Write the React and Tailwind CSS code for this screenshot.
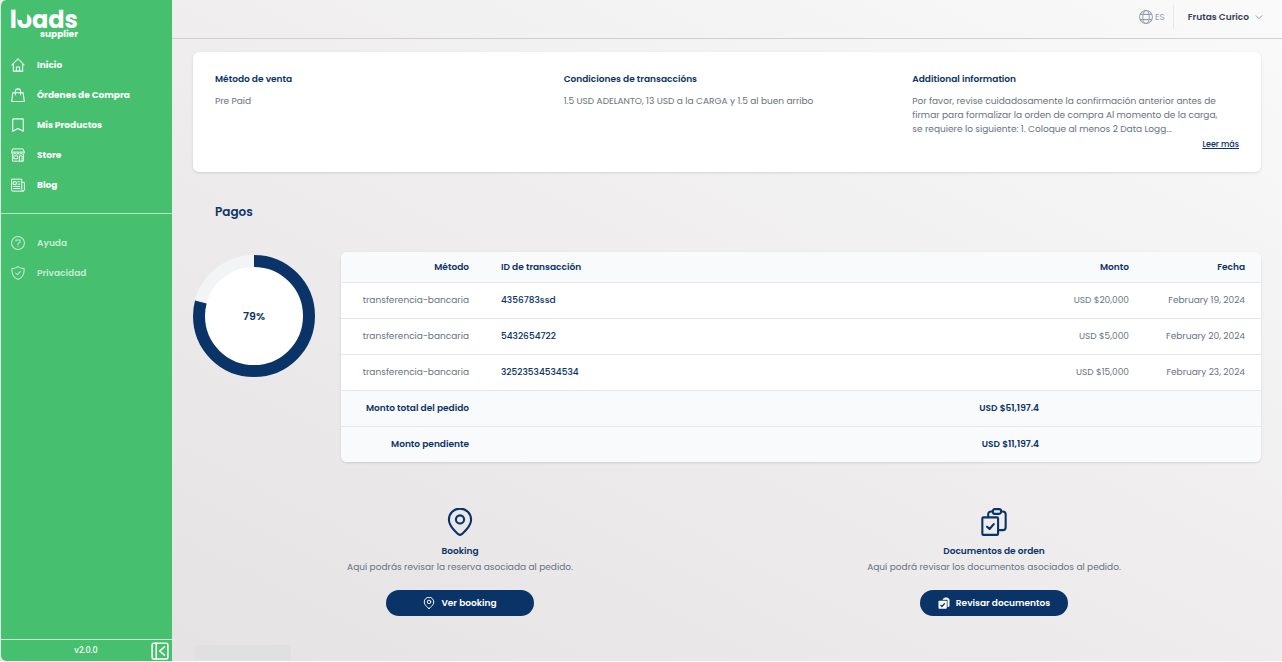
// src/App.jsx

const payments = [
  { id: '4356783ssd', method: 'transferencia-bancaria', amount: 'USD $20,000', date: 'February 19, 2024' },
  { id: '5432654722', method: 'transferencia-bancaria', amount: 'USD $5,000', date: 'February 20, 2024' },
  { id: '32523534534534', method: 'transferencia-bancaria', amount: 'USD $15,000', date: 'February 23, 2024' },
];

const totals = [
  { label: 'Monto total del pedido', amount: 'USD $51,197.4' },
  { label: 'Monto pendiente', amount: 'USD $11,197.4' },
];

// Base wrapper for the line icons
function Icon({ className, strokeWidth = 1.8, children }) {
  return (
    <svg
      viewBox="0 0 24 24"
      fill="none"
      stroke="currentColor"
      strokeWidth={strokeWidth}
      strokeLinecap="round"
      strokeLinejoin="round"
      aria-hidden="true"
      className={className}
    >
      {children}
    </svg>
  );
}

const HomeIcon = (props) => (
  <Icon {...props}>
    <path d="M1.5 12 12 1.5 22.5 12M4 9.8V22.5h16V9.8M9.2 22.5v-7.2h5.6v7.2" />
  </Icon>
);

const BagIcon = (props) => (
  <Icon {...props}>
    <path d="M3.2 8h17.6l2 15H1.2zM7.5 11.5V6a4.5 4.5 0 0 1 9 0v5.5" />
  </Icon>
);

const BookmarkIcon = (props) => (
  <Icon {...props}>
    <path d="M4.5 1.5h15A1.5 1.5 0 0 1 21 3v19.7L12 18l-9 4.7V3a1.5 1.5 0 0 1 1.5-1.5z" />
  </Icon>
);

const StoreIcon = (props) => (
  <Icon {...props} strokeWidth={1.6}>
    <path d="M3.5 1.5h17L23 7.5c0 4-5.5 4-5.5.5 0 3.5-5.5 3.5-5.5 0 0 3.5-5.5 3.5-5.5 0 0 3.5-5.5 3.5-5.5-.5zM1.5 7h21" />
    <path d="M2.5 11v11.5h19V11M5.5 13.5h6v5h-6zM14.5 22.5v-9H19v9" />
  </Icon>
);

const NewsIcon = (props) => (
  <Icon {...props} strokeWidth={1.6}>
    <path d="M18.5 7.5H23V20a2.5 2.5 0 0 1-2.5 2.5h-17A2.5 2.5 0 0 1 1 20V2h17.5v18a2.5 2.5 0 0 0 2 2.5" />
    <path d="M4.5 6.5H9V11H4.5zM12 6.5h3M12 10.5h3M4.5 14.5H15M4.5 18H15" />
  </Icon>
);

const HelpIcon = (props) => (
  <Icon {...props}>
    <circle cx="12" cy="12" r="11" />
    <path d="M8.5 9V7h7v3.5L12 13v2M12 18v.2" />
  </Icon>
);

const ShieldIcon = (props) => (
  <Icon {...props}>
    <path d="M12 1c3 2.5 6.5 3.5 10.5 3.5C23 13 20 20 12 23 4 20 1 13 1.5 4.5 5.5 4.5 9 3.5 12 1zM8 12l3 3 5-5.5" />
  </Icon>
);

const GlobeIcon = (props) => (
  <Icon {...props}>
    <circle cx="12" cy="12" r="11" />
    <ellipse cx="12" cy="12" rx="5.5" ry="11" />
    <path d="M2.5 7.5h19M2.5 16.5h19" />
  </Icon>
);

const PinIcon = (props) => (
  <Icon {...props}>
    <path d="M12 23c-1 0-9.5-6.8-9.5-13a9.5 9.5 0 0 1 19 0C21.5 16.2 13 23 12 23z" />
    <circle cx="12" cy="9.8" r="3.5" />
  </Icon>
);

const DocumentsIcon = (props) => (
  <Icon {...props}>
    <rect x="2" y="8" width="13.5" height="15" rx="1" />
    <path d="M6 16l2.2 2 3.6-4.2" />
    <path d="M7 7.5v-2A2.5 2.5 0 0 1 9.5 3H11M18 3h1.5A2.5 2.5 0 0 1 22 5.5v11a2.5 2.5 0 0 1-2.5 2.5h-4" />
    <rect x="11" y="1" width="7" height="4" rx="1.5" />
  </Icon>
);

// Solid version, used inside the button
const DocumentsSolidIcon = ({ className }) => (
  <svg viewBox="0 0 24 24" aria-hidden="true" className={className}>
    <path
      fill="currentColor"
      d="M9 5.5a3.5 3.5 0 0 1 3-3A3 3 0 0 1 14.500 1h3A3 3 0 0 1 20 2.5 3.500 3.500 0 0 1 23 6v11a3 3 0 0 1-3 3h-1V5.5z"
    />
    <rect x="1" y="7.5" width="16.5" height="16" rx="1.5" fill="currentColor" />
    <path d="M5 16l3 3 5.5-6.5" fill="none" stroke="#0a3467" strokeWidth="2.4" />
  </svg>
);

const CollapseIcon = (props) => (
  <Icon {...props}>
    <rect x="1.5" y="1.5" width="21" height="21" rx="2" />
    <path d="M7 1.5v21M18 6.5 11.5 12l6.5 5.5" />
  </Icon>
);

const mainLinks = [
  { label: 'Inicio', icon: HomeIcon },
  { label: 'Órdenes de Compra', icon: BagIcon },
  { label: 'Mis Productos', icon: BookmarkIcon },
  { label: 'Store', icon: StoreIcon },
  { label: 'Blog', icon: NewsIcon },
];

const helpLinks = [
  { label: 'Ayuda', icon: HelpIcon },
  { label: 'Privacidad', icon: ShieldIcon },
];

function NavList({ links, className }) {
  return (
    <ul className={className}>
      {links.map(({ label, icon: LinkIcon }) => (
        <li key={label}>
          <a href="#" className="flex h-[30px] items-center gap-3 pl-[10px]">
            <LinkIcon className="size-[14px] shrink-0" />
            {label}
          </a>
        </li>
      ))}
    </ul>
  );
}

function Logo() {
  return (
    <a href="#" className="ml-2 flex w-[69px] flex-col items-end pt-[10px] text-white">
      <span className="relative text-2xl leading-5 font-bold">
        loads
        {/* opening in the top of the "o" */}
        <span className="absolute top-1 left-2 h-[6px] w-[9px] bg-[#46c06f]" />
      </span>
      <span className="text-[9px] leading-2 font-bold">supplier</span>
    </a>
  );
}

function Sidebar() {
  return (
    <aside className="flex w-[172px] shrink-0 flex-col rounded-l-md border-l border-[#d9f3e2] bg-[#46c06f]">
      <Logo />
      <nav className="flex-1 pt-3 text-[9px] leading-4">
        <NavList links={mainLinks} className="pb-[13px] font-bold text-white" />
        <NavList links={helpLinks} className="border-t border-[#b5e6c5] pt-[14px] font-semibold text-[#c4ecd1]" />
      </nav>
      <div className="flex h-[22px] items-center border-t border-[#c8eed5] pr-[3px] pl-5 text-white">
        <span className="flex-1 text-center text-[8px] font-medium">v2.0.0</span>
        <button type="button" aria-label="Contraer menú">
          <CollapseIcon className="size-[18px]" strokeWidth={2} />
        </button>
      </div>
    </aside>
  );
}

function Header() {
  return (
    <header className="flex h-[39px] items-center justify-end border-b border-[#d0d0d2] pr-[19px] pb-1 text-[9px] leading-4">
      <button type="button" className="flex items-center gap-[2px] pr-2 text-gray-400">
        <GlobeIcon className="size-[14px]" />
        ES
      </button>
      <button type="button" className="flex h-6 items-center gap-[6px] border-l border-gray-200 pl-[14px] font-semibold text-gray-700">
        Frutas Curico
        <Icon className="size-2 text-gray-400" strokeWidth={3}>
          <path d="m3 8 9 9 9-9" />
        </Icon>
      </button>
    </header>
  );
}

function OrderInfo() {
  return (
    <section className="grid min-h-[120px] grid-cols-3 gap-[22px] rounded-md bg-white px-[22px] py-5 leading-[14px] shadow-sm">
      <div>
        <h3 className="font-semibold text-[#0a3467]">Método de venta</h3>
        <p className="mt-2">Pre Paid</p>
      </div>
      <div>
        <h3 className="font-semibold text-[#0a3467]">Condiciones de transaccións</h3>
        <p className="mt-2">1.5 USD ADELANTO, 13 USD a la CARGA y 1.5 al buen arribo</p>
      </div>
      <div>
        <h3 className="font-semibold text-[#0a3467]">Additional information</h3>
        <p className="mt-2 pr-3">
          Por favor, revise cuidadosamente la confirmación anterior antes de firmar para formalizar la
          orden de compra Al momento de la carga, se requiere lo siguiente: 1. Coloque al menos 2 Data
          Logg...
        </p>
        <div className="mt-[2px] flex justify-end">
          <a href="#" className="text-[8px] font-medium text-[#0a3467] underline">Leer más</a>
        </div>
      </div>
    </section>
  );
}

function PaidChart({ percent }) {
  const length = 2 * Math.PI * 55;

  return (
    <div className="relative mt-[3px] size-[122px] shrink-0">
      <svg viewBox="0 0 122 122" className="size-full -rotate-90" aria-hidden="true">
        <circle cx="61" cy="61" r="55" fill="#fff" stroke="#f3f4f6" strokeWidth="12" />
        <circle
          cx="61"
          cy="61"r="55"
          fill="none"
          stroke="#0a3467"
          strokeWidth="12"
          strokeDasharray={`${(length * percent) / 100} ${length}`}
        />
      </svg>
      <span className="absolute inset-0 flex items-center justify-center text-[11px] font-semibold text-[#0a3467]">
        {percent}%
      </span>
    </div>
  );
}

function PaymentsTable() {
  return (
    <div className="flex-1 overflow-hidden rounded-md bg-white shadow-sm">
      <table className="w-full table-fixed text-right leading-4">
        <thead className="bg-[#f9fafc] text-[#0a3467]">
          <tr className="h-[30px]">
            <th className="w-36 px-4 font-semibold">Método</th>
            <th className="px-4 text-left font-semibold">ID de transacción</th>
            <th className="w-[90px] px-4 font-semibold">Monto</th>
            <th className="w-[116px] px-4 font-semibold">Fecha</th>
          </tr>
        </thead>
        <tbody>
          {payments.map((payment) => (
            <tr key={payment.id} className="h-9 border-t border-gray-200 whitespace-nowrap">
              <td className="px-4">{payment.method}</td>
              <td className="px-4 text-left font-medium text-[#0a3467]">{payment.id}</td>
              <td className="px-4">{payment.amount}</td>
              <td className="px-4">{payment.date}</td>
            </tr>
          ))}
        </tbody>
        <tfoot className="bg-[#f9fafc] text-[#0a3467]">
          {totals.map((total) => (
            <tr key={total.label} className="h-9 border-t border-gray-200 whitespace-nowrap">
              <th className="px-4 font-semibold">{total.label}</th>
              <td className="px-4 font-semibold">{total.amount}</td>
              <td colSpan={2} />
            </tr>
          ))}
        </tfoot>
      </table>
    </div>
  );
}

function ActionCard({ icon, title, text, button }) {
  return (
    <section className="flex flex-col items-center leading-4">
      {icon}
      <h3 className="mt-[7px] font-semibold text-[#0a3467]">{title}</h3>
      <p>{text}</p>
      <button
        type="button"
        className="mt-[15px] flex h-[26px] w-[148px] items-center justify-center gap-[6px] rounded-full bg-[#0a3467] font-semibold text-white"
      >
        {button}
      </button>
    </section>
  );
}

export default function App() {
  return (
    <div className="flex min-h-screen border-b border-white bg-linear-to-bl from-[#fafafa] via-[#eeeced] to-[#e3e1e2] font-[Poppins,Inter,sans-serif]">
      <Sidebar />
      <div className="flex min-w-0 flex-1 flex-col">
        <Header />
        <main className="px-[21px] pt-[13px] text-[9px] text-gray-500">
          <OrderInfo />

          <h2 className="mt-8 pl-[22px] text-xs leading-4 font-semibold text-[#0a3467]">Pagos</h2>

          <div className="mt-8 flex gap-[26px]">
            <PaidChart percent={79} />
            <PaymentsTable />
          </div>

          <div className="mt-[46px] grid grid-cols-2">
            <ActionCard
              icon={<PinIcon className="size-7 text-[#0a3467]" />}
              title="Booking"
              text="Aquí podrás revisar la reserva asociada al pedido."
              button={
                <>
                  <PinIcon className="size-3" strokeWidth={2} />
                  Ver booking
                </>
              }
            />
            <ActionCard
              icon={<DocumentsIcon className="size-7 text-[#0a3467]" />}
              title="Documentos de orden"
              text="Aquí podrá revisar los documentos asociados al pedido."
              button={
                <>
                  <DocumentsSolidIcon className="size-3" />
                  Revisar documentos
                </>
              }
            />
          </div>
        </main>
        <div className="mt-auto ml-[23px] h-4 w-24 bg-[#e1e0e1]" />
      </div>
    </div>
  );
}
